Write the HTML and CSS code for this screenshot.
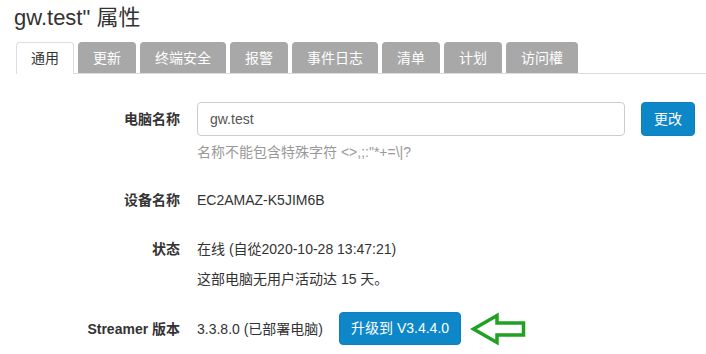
FILE: index.html
```html
<!DOCTYPE html>
<html lang="zh-CN">
<head>
<meta charset="utf-8">
<title>gw.test" 属性</title>
<link rel="stylesheet" href="styles.css">
</head>
<body>
<div class="page">
  <h1 class="title">gw.test" 属性</h1>
  <ul class="tabs">
    <li class="tab active">通用</li>
    <li class="tab">更新</li>
    <li class="tab">终端安全</li>
    <li class="tab">报警</li>
    <li class="tab">事件日志</li>
    <li class="tab">清单</li>
    <li class="tab">计划</li>
    <li class="tab">访问權</li>
  </ul>
  <div class="form">
    <div class="row row-name">
      <div class="label">电脑名称</div>
      <div class="value name-value">
        <div class="input">gw.test</div>
        <button class="btn">更改</button>
      </div>
    </div>
    <div class="row help-row">
      <div class="label"></div>
      <div class="value help">名称不能包含特殊字符 &lt;&gt;,;:"*+=\|?</div>
    </div>
    <div class="row row-device">
      <div class="label">设备名称</div>
      <div class="value">EC2AMAZ-K5JIM6B</div>
    </div>
    <div class="row row-status">
      <div class="label">状态</div>
      <div class="value">在线 (自從2020-10-28 13:47:21)</div>
    </div>
    <div class="row row-idle">
      <div class="label"></div>
      <div class="value">这部电脑无用户活动达 15 天。</div>
    </div>
    <div class="row row-streamer">
      <div class="label">Streamer 版本</div>
      <div class="value streamer-value">
        <span>3.3.8.0 (已部署电脑)</span>
        <button class="btn btn-upgrade">升级到 V3.4.4.0</button>
        <svg class="arrow" width="58" height="34" viewBox="0 0 58 34" aria-hidden="true">
          <polygon points="4.5,17 28,3.5 28,11 54.5,11 54.5,23 28,23 28,30.5" fill="none" stroke="#21a121" stroke-width="3.5" stroke-linejoin="miter"/>
        </svg>
      </div>
    </div>
  </div>
</div>
</body>
</html>
```
FILE: styles.css
```css
* { box-sizing: border-box; }
html, body { margin: 0; padding: 0; background: #fff; }
body {
  font-family: "Liberation Sans", "Noto Sans CJK SC", Arial, sans-serif;
  font-size: 14px;
  color: #333;
  width: 706px;
  height: 354px;
  overflow: hidden;
}
.page { padding: 6px 0 0 14px; }
.title {
  margin: 0;
  font-size: 22px;
  font-weight: normal;
  line-height: 24px;
  color: #333;
}
.tabs {
  list-style: none;
  margin: 12px 0 0 2px;
  padding: 0;
  display: flex;
  border-bottom: 1px solid #ddd;
  height: 32px;
}
.tab {
  height: 31px;
  padding: 0 14px;
  margin-right: 4px;
  line-height: 31px;
  background: #a8a8a8;
  color: #fff;
  border: 1px solid #a8a8a8;
  border-bottom: none;
  border-radius: 4px 4px 0 0;
}
.tab.active {
  background: #fff;
  color: #333;
  border-color: #ddd;
  height: 32px;
  margin-bottom: -1px;
}
.form { margin-top: 28px; }
.row { display: flex; }
.label {
  width: 166px;
  text-align: right;
  font-weight: bold;
  flex: none;
  line-height: 20px;
}
.value {
  margin-left: 17px;
  line-height: 20px;
}
.row-name { align-items: center; height: 34px; }
.row-name .label { line-height: 34px; }
.name-value { display: flex; align-items: center; }
.input {
  width: 428px;
  height: 34px;
  border: 1px solid #ccc;
  border-radius: 4px;
  padding: 0 12px;
  line-height: 32px;
  color: #555;
  font-size: 14px;
}
.btn {
  font-family: inherit;
  font-size: 14px;
  color: #fff;
  background: #0e87c9;
  border: 1px solid #0b7fbf;
  border-radius: 4px;
  height: 34px;
  padding: 0 12px;
  margin-left: 16px;
  line-height: 32px;
}
.help-row { margin-top: 6px; }
.help { color: #999; }
.row-device { margin-top: 28px; }
.row-status { margin-top: 29px; }
.row-idle { margin-top: 10px; }
.row-streamer { margin-top: 23px; align-items: center; height: 33px; }
.streamer-value { display: flex; align-items: center; }
.btn-upgrade { margin-left: 16px; height: 33px; padding: 0 11px; line-height: 31px; }
.arrow { display: block; margin-left: 8px; }
```
